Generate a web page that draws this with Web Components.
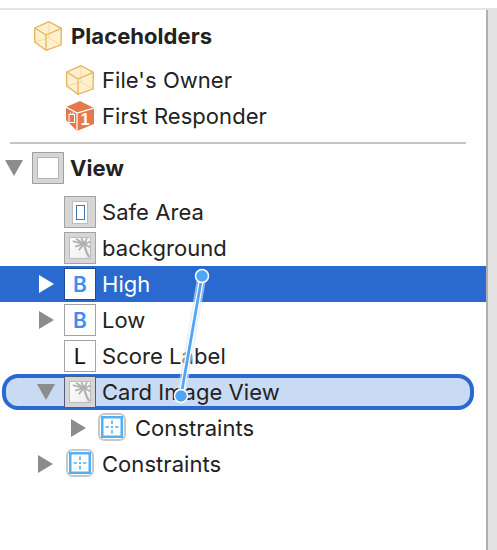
<!DOCTYPE html>
<html lang="en"><head><meta charset="utf-8"><title>Outline</title>
<style>html,body{margin:0;padding:0;background:#fff;height:100%;overflow:hidden}</style>
</head><body>
<outline-app>
  <outline-row indent="34" bold gap="9"><doc-icon slot="icon" type="cube"></doc-icon>Placeholders</outline-row>
  <outline-row indent="66" gap="8" spaced><doc-icon slot="icon" type="cube"></doc-icon>File's Owner</outline-row>
  <outline-row indent="66" gap="8"><doc-icon slot="icon" type="responder"></doc-icon>First Responder</outline-row>
  <outline-sep></outline-sep>
  <outline-row indent="32" gap="6" twist="down" bold><doc-icon slot="icon" type="view"></doc-icon>View</outline-row>
  <outline-row indent="64" spaced><doc-icon slot="icon" type="safe"></doc-icon>Safe Area</outline-row>
  <outline-row indent="64"><doc-icon slot="icon" type="image"></doc-icon>background</outline-row>
  <outline-row indent="64" twist="right" state="selected"><doc-icon slot="icon" type="button" state="selected"></doc-icon>High</outline-row>
  <outline-row indent="64" twist="right"><doc-icon slot="icon" type="button"></doc-icon>Low</outline-row>
  <outline-row indent="64"><doc-icon slot="icon" type="label"></doc-icon>Score Label</outline-row>
  <outline-row indent="64" twist="down" state="target"><doc-icon slot="icon" type="image" state="target"></doc-icon>Card Image View</outline-row>
  <outline-row indent="99" tw="71" gap="8" twist="right"><doc-icon slot="icon" type="constraints"></doc-icon>Constraints</outline-row>
  <outline-row indent="67" tw="38" gap="7" twist="right"><doc-icon slot="icon" type="constraints"></doc-icon>Constraints</outline-row>
  <connection-wire slot="overlay"></connection-wire>
</outline-app>
<script>
class OutlineApp extends HTMLElement {
  constructor(){super();this.attachShadow({mode:'open'}).innerHTML=`<style>
    :host{display:flex;position:relative;width:497px;height:550px;box-sizing:border-box;padding-top:8px;background:#fff;overflow:hidden;font-family:"Inter","Liberation Sans",sans-serif;color:#222}
    .wrap{flex:1;display:flex;flex-direction:column;min-width:0}
    .top{height:2px;background:#e4e4e4;flex:none}
    .body{flex:1;display:flex;min-height:0}
    main{flex:1;display:flex;flex-direction:column;padding-top:8px;min-width:0}
    .rail{flex:none;width:11px;box-sizing:border-box;background:#e3e3e3;border-left:2px solid #b0b0b0}
  </style><div class="wrap"><div class="top"></div><div class="body"><main><slot></slot></main><div class="rail"></div></div></div><slot name="overlay"></slot>`;}
}
class OutlineSep extends HTMLElement {
  constructor(){super();this.attachShadow({mode:'open'}).innerHTML=`<style>
    :host{display:block;height:2px;background:#c4c4c4;margin:8px 20px 6px 10px}
  </style>`;}
}
class OutlineRow extends HTMLElement {
  constructor(){super();this.attachShadow({mode:'open'});}
  connectedCallback(){
    const indent=+this.getAttribute('indent')||0, twist=this.getAttribute('twist'), state=this.getAttribute('state'), bold=this.hasAttribute('bold');
    const gap=this.hasAttribute('gap')?+this.getAttribute('gap'):6;
    const sel=state==='selected', tgt=state==='target';
    const offset=tgt?6:0;
    const triLeft=(this.hasAttribute('tw')?+this.getAttribute('tw'):(twist==='down'?indent-27:indent-25))-offset;
    const tri = twist==='down'
      ? `<svg class="tw" width="18" height="16" viewBox="0 0 18 16"><path d="M0 0H18L9 16Z" fill="#8c8c8c"/></svg>`
      : twist==='right'
      ? `<svg class="tw" width="15" height="18" viewBox="0 0 15 18"><path d="M0 0V18L15 9Z" fill="${sel?'#fff':'#8c8c8c'}"/></svg>`
      : '';
    this.shadowRoot.innerHTML=`<style>
      :host{display:flex;align-items:center;height:36px;flex:none;box-sizing:border-box;position:relative;
        padding-left:${indent-offset}px;font-size:22px;line-height:1;white-space:nowrap;letter-spacing:.05px;
        font-weight:${bold?700:400};color:${sel?'#fff':'#222'}}
      :host([state="selected"]){background:#2a69d0}
      :host([state="target"]){background:#c9daf3;margin:0 12px 0 2px;border:4px solid #2a69d0;border-radius:16px}
      :host([spaced]){margin-top:8px}
      .tw{position:absolute;top:50%;transform:translateY(-50%);left:${triLeft}px;display:block}
      .icon{display:flex;flex:none;margin-right:${gap}px}
      .label{margin-top:-1px}
    </style>${tri}<span class="icon"><slot name="icon"></slot></span><span class="label"><slot></slot></span>`;
  }
}
const cube=(fill,stroke)=>`<path d="M15 .7 27.4 7.4 27 24 12 29.3 .7 21V7Z" fill="${fill}" stroke="${stroke}" stroke-width="1.3" stroke-linejoin="round"/>
  <path d="M15 .7V17M.7 21 15 17 27 24" fill="none" stroke="${stroke}" stroke-opacity=".35" stroke-width="1"/>
  <path d="M.7 7 12 14 27.4 7.4M12 14V29.3" fill="none" stroke="${stroke}" stroke-width="1.2" stroke-linejoin="round"/>`;
const palm=(f)=>`<g stroke="${f}" fill="none" stroke-linecap="round">
  <path d="M17 7 4 4M17 7 8 1.500M17 7 14 .8M17 7 20 1M17 7 24 4.500M17 7 24 11M17 7 7 10M17 7 11 14" stroke-width="2"/>
  <path d="M17 7C18 12 19 17 22.500 22" stroke-width="2.600"/></g>`;
class DocIcon extends HTMLElement {
  constructor(){super();this.attachShadow({mode:'open'});}
  connectedCallback(){
    const t=this.getAttribute('type'), st=this.getAttribute('state');
    const edge=st==='selected'?'#1d4c94':st==='target'?'#4d5f7c':'#a3a3a3';
    let w=32,h=32,body='';
    if(t==='cube'){w=28;h=30;body=`<svg width="28" height="30" viewBox="0 0 28 30">${cube('#fdf0cb','#e5b15e')}</svg>`;}
    else if(t==='responder'){w=28;h=30;body=`<svg width="28" height="30" viewBox="0 0 28 30">
      <path d="M14 0 28 7V23L11 30 0 19V6Z" fill="#e5794b"/>
      <path d="M0 6 11 12 28 7M11 12V30" fill="none" stroke="#fff" stroke-width="1.200"/>
      <rect x="3" y="13.500" width="5.500" height="8" fill="none" stroke="#fff" stroke-width="1"/>
      <path d="M4.500 13.500V11.500M7 13.500V11.500" stroke="#fff"/>
      <text x="19" y="24" text-anchor="middle" font-family="'Liberation Sans',sans-serif" font-weight="700" font-size="16.500" fill="#fff">1</text></svg>`;}
    else if(t==='view'){body=`<div class="f grey c" style="border-color:#a0a0a0"><div class="inner"></div></div>`;}
    else if(t==='safe'){body=`<div class="f grey c"><div class="phone c"><div class="screen"></div></div></div>`;}
    else if(t==='image'){body=`<div class="f grey c" style="border-color:${edge}"><div class="photo"><svg width="20" height="20" viewBox="0 0 24 24">${palm('#b0b0b0')}</svg></div></div>`;}
    else if(t==='button'){body=`<div class="f c btn" style="border-color:${edge}">B</div>`;}
    else if(t==='label'){body=`<div class="f c lbl" style="border-color:${edge}">L</div>`;}
    else if(t==='constraints'){w=28;h=28;body=`<svg class="ct" width="28" height="28" viewBox="0 0 28 28">
      <rect x="1" y="1" width="26" height="26" rx="5.500" fill="#fff" stroke="#c8c8c8" stroke-width="2"/>
      <rect x="4.250" y="4.250" width="19.500" height="19.500" fill="#fff" stroke="#50b0f8" stroke-width="2.500"/>
      <path d="M14 7.500V11M14 13V15M14 17V20.500M7.500 14H11M13 14H15M17 14H20.500" stroke="#50b0f8" stroke-width="1.600"/></svg>`;}
    this.shadowRoot.innerHTML=`<style>
      :host{display:block;width:${w}px;height:${h}px;flex:none}
      svg{display:block}
      .ct{position:relative;top:-1px;left:-1px}
      .f{width:32px;height:32px;box-sizing:border-box;border:1.500px solid #a3a3a3;background:#fff}
      .grey{background:#d6d6d6}
      .c{display:flex;align-items:center;justify-content:center;line-height:1}
      .inner{width:22px;height:22px;box-sizing:border-box;border:1px solid #b4b4b4;background:#fff}
      .phone{width:16px;height:23px;box-sizing:border-box;background:#fff;border:1px solid #bdbdbd}
      .screen{width:9px;height:15px;box-sizing:border-box;border:1.500px solid #3b79b6}
      .photo{width:22px;height:22px;box-sizing:border-box;background:linear-gradient(135deg,#fdfdfd,#eeeeee);border:1px solid #bcbcbc}
      .btn{color:#3f8ef5;font-size:21px;font-weight:600}
      .lbl{color:#111;font-size:22px;font-weight:400}
    </style>${body}`;
  }
}
class ConnectionWire extends HTMLElement {
  constructor(){super();this.attachShadow({mode:'open'}).innerHTML=`<style>
    :host{position:absolute;left:160px;top:262px;width:60px;height:146px;pointer-events:none}
    svg{display:block}
  </style><svg width="60" height="146" viewBox="0 0 60 146">
    <line x1="42" y1="14" x2="21" y2="134" stroke="#dfeaf8" stroke-opacity=".6" stroke-width="9"/>
    <line x1="42" y1="14" x2="21" y2="134" stroke="#fff" stroke-width="5"/>
    <line x1="42" y1="14" x2="21" y2="134" stroke="#4fa6f8" stroke-width="2.800"/>
    <circle cx="42" cy="14" r="6.500" fill="#4fa6f8" stroke="#fff" stroke-width="1.500"/>
    <circle cx="21" cy="134" r="6.500" fill="#4fa6f8" stroke="#fff" stroke-width="1.500"/>
  </svg>`;}
}
customElements.define('outline-app',OutlineApp);
customElements.define('outline-sep',OutlineSep);
customElements.define('outline-row',OutlineRow);
customElements.define('doc-icon',DocIcon);
customElements.define('connection-wire',ConnectionWire);
</script>
</body></html>
